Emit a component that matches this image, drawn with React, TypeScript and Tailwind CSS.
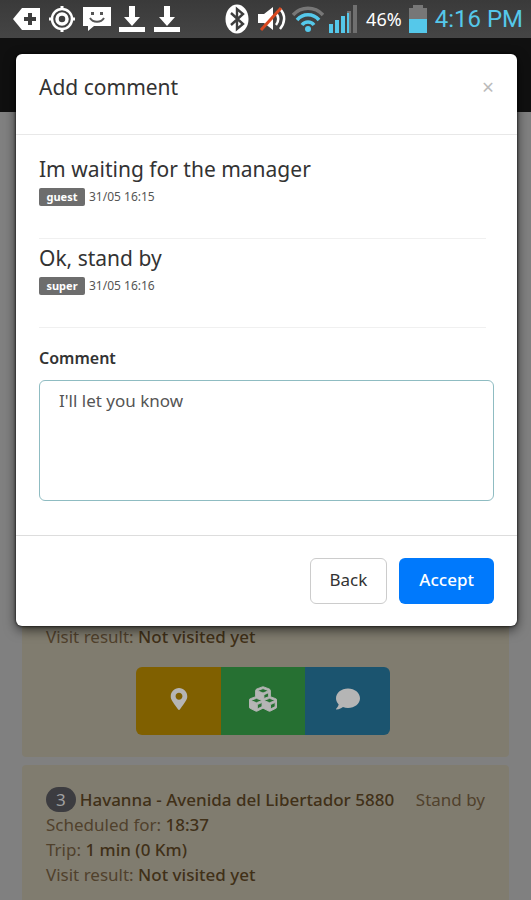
import React from "react";
import { FaMapMarkerAlt, FaComment, FaCubes } from "react-icons/fa";

const comments = [
  { text: "Im waiting for the manager", user: "guest", date: "31/05 16:15" },
  { text: "Ok, stand by", user: "super", date: "31/05 16:16" },
];

function DownloadIcon() {
  return (
    <svg viewBox="0 0 28 28" className="h-7 w-7" fill="#fff" aria-hidden="true">
      <path d="M11 1h6v11h5l-8 9-8-9h5zM1 22h26v5H1z" />
    </svg>
  );
}

function StatusBar() {
  return (
    <div className="flex h-[38px] items-center justify-between bg-linear-to-b from-[#3a3a3a] to-[#454545] pr-2 pl-[13px]">
      <div className="flex items-center gap-[7px]">
        <svg viewBox="0 0 28 24" className="h-6 w-7" aria-hidden="true">
          <path d="M0 12 9 1h18v22H9z" fill="#fff" />
          <path d="M17 6v12M11 12h12" stroke="#3d3d3d" strokeWidth="4" />
        </svg>
        <svg viewBox="0 0 28 28" className="h-7 w-7" fill="none" stroke="#fff" aria-hidden="true">
          <circle cx="14" cy="14" r="10" strokeWidth="2.5" />
          <circle cx="14" cy="14" r="5" strokeWidth="3.5" />
          <path d="M14 1v4M14 23v4M1 14h4M23 14h4" strokeWidth="3" />
        </svg>
        <svg viewBox="0 0 28 24" className="h-6 w-7" aria-hidden="true">
          <path d="M0 0h28v19H11l-6 5v-5H0z" fill="#fff" />
          <path d="M7 11c3 5 11 5 14 0" fill="none" stroke="#555" strokeWidth="2" />
          <path d="M8 5h3v3H8zM17 5h3v3h-3z" fill="#555" />
        </svg>
        <DownloadIcon />
        <DownloadIcon />
      </div>
      <div className="flex items-center">
        <svg viewBox="0 0 24 30" className="mr-2 h-[30px] w-6" aria-hidden="true">
          <ellipse cx="12" cy="15" rx="11.5" ry="14.5" fill="#fff" />
          <path d="m6 9 12 11-6 5V5l6 5L6 21" fill="none" stroke="#3d3d3d" strokeWidth="2.4" />
        </svg>
        <svg viewBox="0 0 30 28" className="mr-[5px] h-7 w-[30px]" fill="none" aria-hidden="true">
          <path d="M1 9h6l9-7v23l-9-7H1z" fill="#fff" />
          <path d="M19 8c3 4 3 8 0 12M23 4c6 6 5 14 0 20" stroke="#fff" strokeWidth="2.5" />
          <path d="M4 25 24 3" stroke="#d9481f" strokeWidth="3" />
        </svg>
        <svg viewBox="0 0 32 28" className="mr-1 h-7 w-8" fill="none" aria-hidden="true">
          <path d="M1 10C9 1 23 1 31 10" stroke="#777" strokeWidth="3.5" />
          <path d="M5 15c6-7 16-7 22 0M10 20c3-4 9-4 12 0" stroke="#55c8ea" strokeWidth="3.5" />
          <circle cx="16" cy="24" r="3" fill="#55c8ea" />
        </svg>
        <svg viewBox="0 0 30 30" className="mr-2 h-[30px] w-[30px]" aria-hidden="true">
          <path d="M1 20h4v9H1zM7 16h4v13H7zM13 12h4v17h-4z" fill="#55c8ea" />
          <path d="M19 7h4v22h-4zM25 1h4v28h-4z" fill="#707070" />
          <path d="M19 9h2v20h-2z" fill="#55c8ea" />
        </svg>
        <span className="text-lg text-white">46%</span>
        <svg viewBox="0 0 18 28" className="mr-2 ml-[7px] h-7 w-[18px]" aria-hidden="true">
          <path d="M4 0h10v3h4v11H0V3h4z" fill="#777" />
          <path d="M0 14h18v14H0z" fill="#55c8ea" />
        </svg>
        <span className="font-[Roboto] text-2xl text-[#55c8ea]">4:16 PM</span>
      </div>
    </div>
  );
}

function VisitResult() {
  return (
    <p>
      Visit result: <strong className="font-medium text-[#403018]">Not visited yet</strong>
    </p>
  );
}

function VisitList() {
  return (
    <main className="flex flex-col gap-2 px-[22px] pt-6 text-[17px] leading-[25px] text-[#50412c]">
      <section className="flex h-[621px] flex-col justify-end rounded-sm bg-[#807c6f] px-6 pb-[22px]">
        <VisitResult />
        <div className="mt-[18px] mr-[5px] flex justify-center text-[#b5b5b5]">
          <button aria-label="Map" className="flex h-[68px] w-[85px] items-center justify-center rounded-l-md bg-[#806000] pb-1">
            <FaMapMarkerAlt size={22} />
          </button>
          <button aria-label="Packages" className="flex h-[68px] w-[84px] items-center justify-center bg-[#267032] pb-1">
            <FaCubes size={28} stroke="currentColor" strokeWidth={16} />
          </button>
          <button aria-label="Comments" className="flex h-[68px] w-[85px] items-center justify-center rounded-r-md bg-[#1b546f] pb-1">
            <FaComment size={24} />
          </button>
        </div>
      </section>
      <section className="rounded-sm bg-[#807c6f] px-6 pt-[22px] pb-6">
        <div className="flex justify-between whitespace-nowrap">
          <h2 className="flex items-center gap-1 font-medium text-[#403018]">
            <span className="rounded-full bg-[#3c3c40] px-[10px] font-normal text-[#a0a0a0]">3</span>
            Havanna - Avenida del Libertador 5880
          </h2>
          <span>Stand by</span>
        </div>
        <p>
          Scheduled for: <strong className="font-medium text-[#403018]">18:37</strong>
        </p>
        <p>
          Trip: <strong className="font-medium text-[#403018]">1 min (0 Km)</strong>
        </p>
        <VisitResult />
      </section>
    </main>
  );
}

function CommentDialog() {
  return (
    <div
      role="dialog"
      aria-labelledby="dialog-title"
      className="absolute top-[54px] right-[14px] left-4 rounded-md bg-white text-[#333] shadow-[0_4px_12px_rgba(0,0,0,0.6),0_0_3px_#000]"
    >
      <header className="flex h-[81px] items-start justify-between border-b border-[#e8e8e8] px-[23px] pt-[18px]">
        <h1 id="dialog-title" className="text-[21px] leading-[30px]">Add comment</h1>
        <button aria-label="Close" className="text-[21px] leading-[30px] text-[#bbb]">×</button>
      </header>
      <div className="px-[23px] pt-[15px] pb-[34px]">
        <ul>
          {comments.map((c) => (
            <li key={c.user} className="mr-2 border-b border-[#f0f0f0] pt-1 pb-7">
              <p className="text-[21px] leading-[30px]">{c.text}</p>
              <div className="flex h-[26px] items-center gap-1 text-xs text-[#555]">
                <span className="w-[46px] rounded-xs bg-[#6d6d6d] text-center text-[11px] leading-[18px] font-bold text-white">
                  {c.user}
                </span>
                <time>{c.date}</time>
              </div>
            </li>
          ))}
        </ul>
        <label htmlFor="comment" className="mt-[18px] block text-base leading-6 font-semibold">Comment</label>
        <textarea
          id="comment"
          defaultValue="I'll let you know"
          className="mt-[10px] block h-[121px] w-full resize-none rounded-md border border-[#8fbcc2] px-[19px] py-2 text-[17px] leading-6 text-[#555] outline-none"
        />
      </div>
      <footer className="flex justify-end gap-3 border-t border-[#ddd] px-[23px] py-[22px] text-[17px]">
        <button className="h-[46px] rounded-md border border-[#ccc] px-[19px] pb-[2px]">Back</button>
        <button className="h-[46px] rounded-md bg-[#0079fc] px-5 pb-[2px] font-medium text-white">Accept</button>
      </footer>
    </div>
  );
}

export default function App() {
  return (
    <div className="relative h-screen overflow-hidden bg-[#808080] font-['Noto_Sans',sans-serif]">
      <StatusBar />
      <div className="h-[74px] bg-[#101010]" />
      <VisitList />
      <CommentDialog />
    </div>
  );
}
